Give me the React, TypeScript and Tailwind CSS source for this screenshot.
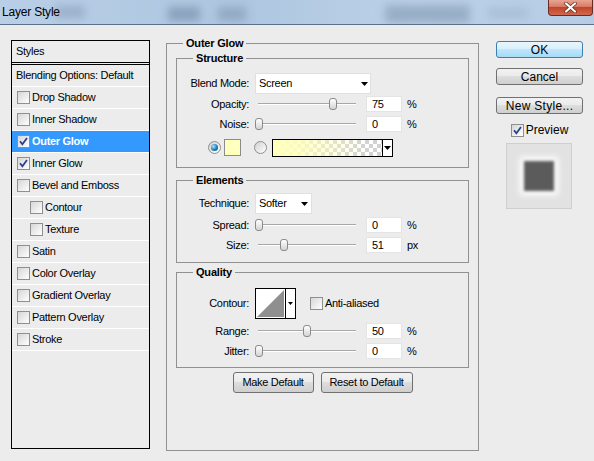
import React from "react";

function Checkbox({ checked = false }: { checked?: boolean }) {
  return (
    <span className="flex h-[13px] w-[13px] shrink-0 items-center justify-center border border-[#8e8f8f] bg-[linear-gradient(135deg,#d6d6d6,#ffffff)]">
      {checked && (
        <svg width="9" height="9" viewBox="0 0 9 9">
          <path d="M1 4.2 L3.4 7.2 L8 1" fill="none" stroke="#2c3f8f" strokeWidth="1.8" />
        </svg>
      )}
    </span>
  );
}

function Radio({ on = false }: { on?: boolean }) {
  return (
    <span className="flex h-[13px] w-[13px] shrink-0 items-center justify-center rounded-full border border-[#8e8f8f] bg-[linear-gradient(135deg,#d0d0d0,#ffffff)]">
      {on && (
        <span className="h-[7px] w-[7px] rounded-full bg-[radial-gradient(circle_at_35%_35%,#a9e4ff,#1c7bb8_55%,#0d4f80)]" />
      )}
    </span>
  );
}

function Arrow() {
  return (
    <svg width="7" height="4" viewBox="0 0 7 4">
      <path d="M0 0H7L3.5 4Z" fill="#000" />
    </svg>
  );
}

function Slider({ pos }: { pos: number }) {
  return (
    <div className="relative h-full w-[104px]">
      <div className="absolute left-[3px] top-[9px] h-[2px] w-[98px] border-t border-b border-t-[#a8a8a8] border-b-white" />
      <div
        className="absolute top-[4px] h-[12px] w-[8px] rounded-[3px] border border-[#8a8a8a] bg-[linear-gradient(#ffffff,#d4d4d4)]"
        style={{ left: pos }}
      />
    </div>
  );
}

function SliderRow({
  label,
  value,
  unit,
  pos,
  className = "",
}: {
  label: string;
  value: string;
  unit: string;
  pos: number;
  className?: string;
}) {
  return (
    <div className={`flex h-[20px] items-center ${className}`}>
      <span className="w-[72px] text-right">{label}</span>
      <div className="ml-[6px] h-full">
        <Slider pos={pos} />
      </div>
      <div className="ml-[7px] flex h-[16px] w-[36px] items-center border border-[#e4e4e4] bg-white pl-[5px]">
        {value}
      </div>
      <span className="ml-[5px]">{unit}</span>
    </div>
  );
}

function StyleRow({
  label,
  checked = false,
  selected = false,
  indent = false,
}: {
  label: string;
  checked?: boolean;
  selected?: boolean;
  indent?: boolean;
}) {
  return (
    <div
      className={`flex h-[22px] items-center border-b border-white ${
        selected ? "bg-[#3399ff] font-bold text-white" : ""
      } ${indent ? "pl-[18px]" : "pl-[5px]"}`}
    >
      <Checkbox checked={checked} />
      <span className="ml-[2px]">{label}</span>
    </div>
  );
}

function Btn({
  children,
  className = "",
  primary = false,
}: {
  children: React.ReactNode;
  className?: string;
  primary?: boolean;
}) {
  return (
    <div
      className={`flex items-center justify-center rounded-[3px] border ${
        primary
          ? "border-[#3c7fb1] bg-[linear-gradient(#eaf6fd_0%,#d9f0fc_45%,#bee6fd_50%,#a7d9f5_100%)]"
          : "border-[#707070] bg-[linear-gradient(#f2f2f2_0%,#ebebeb_45%,#dddddd_50%,#cfcfcf_100%)]"
      } ${className}`}
    >
      {children}
    </div>
  );
}

export default function App() {
  return (
    <div className="h-[461px] w-[594px] overflow-hidden bg-[#ececec] font-['Liberation_Sans',Arial,sans-serif] text-[11px] leading-none tracking-[-0.3px] text-black">
      {/* Title bar */}
      <div className="relative h-[25px] overflow-hidden border-b border-[#5a6f88] bg-[linear-gradient(to_right,#b9cfe7,#aec6e0_40%,#bcd1e8_70%,#b6cce5)]">
        <div className="absolute left-[55px] top-[6px] h-[12px] w-[30px] bg-[#9ab0ca] blur-[4px]" />
        <div className="absolute left-[168px] top-[7px] h-[14px] w-[32px] bg-[#8aa1bd] blur-[4px]" />
        <div className="absolute left-[218px] top-[7px] h-[14px] w-[28px] bg-[#93a9c3] blur-[4px]" />
        <div className="absolute left-[385px] top-[5px] h-[18px] w-[85px] bg-[#98aec7] blur-[4px]" />
        <div className="absolute left-[488px] top-[8px] h-[10px] w-[40px] bg-[#a9bed6] blur-[4px]" />
        <div className="absolute left-[2px] top-[5px] text-[12px] leading-[14px] tracking-[-0.2px] text-black">
          Layer Style
        </div>
        <div className="absolute left-[548px] top-0 flex h-[16px] w-[45px] items-center justify-center rounded-b-[4px] border border-t-0 border-[#6b2a22] bg-[linear-gradient(#e8a493_0%,#d77a64_45%,#c44428_50%,#d0694e_100%)]">
          <svg width="13" height="11" viewBox="0 0 13 11">
            <path d="M2 1.5 L11 9.5 M11 1.5 L2 9.5" stroke="#5a2a24" strokeWidth="3.6" strokeLinecap="round" />
            <path d="M2 1.5 L11 9.5 M11 1.5 L2 9.5" stroke="#ffffff" strokeWidth="2.2" strokeLinecap="round" />
          </svg>
        </div>
      </div>

      <div className="flex items-start pl-[11px]">
        {/* Left styles list */}
        <div className="mt-[15px] flex h-[409px] w-[139px] flex-col border border-black">
          <div className="flex h-[22px] items-center border-b border-black pl-[4px]">Styles</div>
          <div className="mt-[1px] flex-1 border-t border-black">
            <div className="flex h-[22px] items-center border-b border-white pl-[4px]">
              Blending Options: Default
            </div>
            <StyleRow label="Drop Shadow" />
            <StyleRow label="Inner Shadow" />
            <StyleRow label="Outer Glow" checked selected />
            <StyleRow label="Inner Glow" checked />
            <StyleRow label="Bevel and Emboss" />
            <StyleRow label="Contour" indent />
            <StyleRow label="Texture" indent />
            <StyleRow label="Satin" />
            <StyleRow label="Color Overlay" />
            <StyleRow label="Gradient Overlay" />
            <StyleRow label="Pattern Overlay" />
            <StyleRow label="Stroke" />
          </div>
        </div>

        {/* Main panel */}
        <fieldset className="ml-[16px] mt-[11px] h-[415px] w-[313px] border border-[#919191]">
          <legend className="ml-[16px] h-[14px] px-[3px] font-bold leading-[14px] tracking-[-0.2px]">Outer Glow</legend>
          <div className="px-[9px] pt-[1px]">
            {/* Structure */}
            <fieldset className="border border-[#919191]">
              <legend className="ml-[16px] h-[14px] px-[3px] font-bold leading-[14px] tracking-[-0.2px]">Structure</legend>
              <div className="pb-[9px] pt-[8px]">
                <div className="flex h-[21px] items-center">
                  <span className="w-[72px] text-right">Blend Mode:</span>
                  <div className="ml-[6px] flex h-[21px] w-[116px] items-center justify-between border border-[#e0e0e0] bg-white pl-[3px] pr-[2px]">
                    <span>Screen</span>
                    <Arrow />
                  </div>
                </div>
                <SliderRow label="Opacity:" value="75" unit="%" pos={74} />
                <SliderRow label="Noise:" value="0" unit="%" pos={0} />
                <div className="mt-[3px] flex h-[21px] items-center">
                  <div className="ml-[31px]">
                    <Radio on />
                  </div>
                  <div className="ml-[3px] h-[17px] w-[17px] border border-[#8c8c8c] bg-[#ffffbe]" />
                  <div className="ml-[13px]">
                    <Radio />
                  </div>
                  <div className="ml-[5px] flex h-[18px] w-[121px] border border-black">
                    <div className="relative flex-1 bg-[conic-gradient(#d2d2d2_25%,#ffffff_0_50%,#d2d2d2_0_75%,#ffffff_0)] bg-[length:8px_8px]">
                      <div className="absolute inset-0 bg-[linear-gradient(to_right,#ffffbe_0%,rgba(255,255,190,0.85)_25%,rgba(255,255,190,0)_85%)]" />
                    </div>
                    <div className="flex w-[10px] items-center justify-center border-l border-black bg-white">
                      <Arrow />
                    </div>
                  </div>
                </div>
              </div>
            </fieldset>

            {/* Elements */}
            <fieldset className="mt-[5px] border border-[#919191]">
              <legend className="ml-[16px] h-[14px] px-[3px] font-bold leading-[14px] tracking-[-0.2px]">Elements</legend>
              <div className="pb-[7px] pt-[6px]">
                <div className="flex h-[21px] items-center">
                  <span className="w-[72px] text-right">Technique:</span>
                  <div className="ml-[6px] flex h-[21px] w-[57px] items-center justify-between border border-[#e0e0e0] bg-white pl-[3px] pr-[3px]">
                    <span>Softer</span>
                    <Arrow />
                  </div>
                </div>
                <SliderRow className="mt-[1px]" label="Spread:" value="0" unit="%" pos={0} />
                <SliderRow label="Size:" value="51" unit="px" pos={25} />
              </div>
            </fieldset>

            {/* Quality */}
            <fieldset className="mt-[2px] border border-[#919191]">
              <legend className="ml-[16px] h-[14px] px-[3px] font-bold leading-[14px] tracking-[-0.2px]">Quality</legend>
              <div className="pb-[6px] pt-[9px]">
                <div className="flex h-[31px] items-center">
                  <span className="w-[72px] text-right">Contour:</span>
                  <div className="ml-[6px] flex h-[31px] w-[41px] border border-black bg-white">
                    <div className="h-full w-[29px] p-[1px]">
                      <svg viewBox="0 0 27 27" className="h-full w-full" preserveAspectRatio="none">
                        <polygon points="0,27 27,0 27,27" fill="#8f8f8f" />
                      </svg>
                    </div>
                    <div className="flex flex-1 items-center justify-center border-l border-black">
                      <svg width="5" height="3" viewBox="0 0 5 3">
                        <path d="M0 0H5L2.5 3Z" fill="#000" />
                      </svg>
                    </div>
                  </div>
                  <div className="ml-[14px]">
                    <Checkbox />
                  </div>
                  <span className="ml-[2px]">Anti-aliased</span>
                </div>
                <SliderRow className="mt-[2px]" label="Range:" value="50" unit="%" pos={48} />
                <SliderRow label="Jitter:" value="0" unit="%" pos={0} />
              </div>
            </fieldset>

            <div className="mt-[4px] flex justify-center gap-[7px]">
              <Btn className="h-[21px] w-[81px]">Make Default</Btn>
              <Btn className="h-[21px] w-[92px]">Reset to Default</Btn>
            </div>
          </div>
        </fieldset>

        {/* Right column */}
        <div className="ml-[17px] mt-[16px] flex w-[87px] flex-col text-[12px] tracking-normal">
          <Btn primary className="h-[17px]">OK</Btn>
          <Btn className="mt-[10px] h-[17px]">Cancel</Btn>
          <Btn className="mt-[12px] h-[17px] tracking-[0.3px]">New Style...</Btn>
          <div className="mt-[9px] flex h-[14px] items-center justify-center">
            <Checkbox checked />
            <span className="ml-[2px]">Preview</span>
          </div>
          <div className="ml-[10px] mt-[6px] flex h-[66px] w-[66px] items-center justify-center border border-[#cfcfcf] bg-[#e2e2e2]">
            <div className="h-[30px] w-[30px] bg-[#5b5b5b] shadow-[0_0_6px_4px_#ffffff] blur-[1.5px]" />
          </div>
        </div>
      </div>
    </div>
  );
}
